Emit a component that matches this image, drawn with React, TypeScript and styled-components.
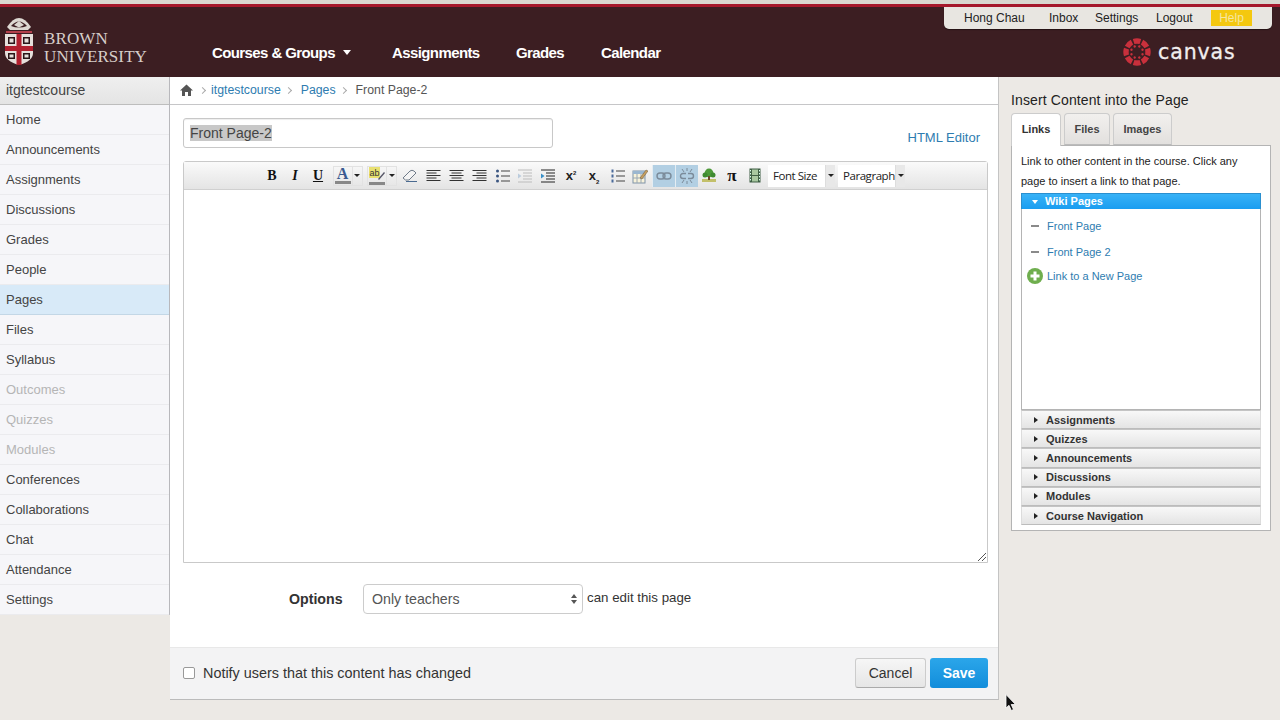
import React from "react";
import styled, { createGlobalStyle } from "styled-components";

const Global = createGlobalStyle`
  html, body { margin: 0; padding: 0; height: 720px; overflow: hidden; background: #ece9e5; }
  * { box-sizing: border-box; }
  body { font-family: "Liberation Sans", Arial, sans-serif; color: #333; }
`;

const Page = styled.div`
  width: 1280px; height: 720px; position: relative; overflow: hidden; display: flex; flex-direction: column;
`;
const TopStrip = styled.div`height: 4px; background: #d9d8d0;`;
const RedLine = styled.div`height: 3px; background: #a5182b;`;
const Header = styled.header`
  height: 70px; background: #3c1e22; display: flex; padding-left: 5px;
`;
const LogoBox = styled.div`display: flex; align-items: flex-start; width: 207px; padding-top: 10px;`;
const LogoText = styled.div`
  font-family: "Liberation Serif", serif; color: #d6cdc9; font-size: 17px; line-height: 18px; letter-spacing: 0.1px;
  margin: 13px 0 0 11px; white-space: nowrap; font-weight: 400;
`;
const Nav = styled.nav`display: flex; align-items: center; height: 70px; padding-top: 20px;`;
const NavItem = styled.span<{ $w: number }>`
  color: #fff; font-size: 15px; font-weight: 700; letter-spacing: -0.6px; width: ${p => p.$w}px; display: flex; align-items: center; white-space: nowrap;
`;
const Caret = styled.i`
  display: inline-block; width: 0; height: 0; border: 4.5px solid transparent; border-top: 5px solid #fff; border-bottom: 0; margin-left: 8px;
`;
const RightHead = styled.div`margin-left: auto; width: 336px; display: flex; flex-direction: column; align-items: flex-start;`;
const UserBar = styled.div`
  width: 328px; height: 22px; background: #e8e6e1; border-radius: 0 0 5px 5px; display: flex; align-items: center;
  font-size: 12px; color: #222; position: relative; box-shadow: 0 1px 1px rgba(0,0,0,.4);
`;
const UserLink = styled.span<{ $w: number }>`display: block; width: ${p => p.$w}px; white-space: nowrap;`;
const Help = styled.span`
  background: #f4c80f; color: #f5e6a0; width: 41px; height: 16px; text-align: center; line-height: 16px; font-size: 12px; margin-left: 0;
`;
const CanvasRow = styled.div`display: flex; align-items: center; margin: 9px 0 0 179px; gap: 7px;`;
const CanvasWord = styled.span`
  font-family: "DejaVu Sans", sans-serif; color: #f1eeee; font-size: 20.5px; line-height: 26px; letter-spacing: 0.9px; font-weight: 400;
  -webkit-text-stroke: 0.3px #f1eeee;
`;

const Body = styled.div`display: flex; height: 643px;`;
const Sidebar = styled.aside`
  width: 170px; height: 538px; background: #f6f6f9; border-right: 1px solid #b8b8bc; border-bottom: 1px solid #c4c4c8; flex: none;
`;
const CourseTitle = styled.div`
  height: 28px; background: linear-gradient(#efefef, #e4e4e4); border-bottom: 1px solid #bdbdbd; color: #444; font-size: 14px;
  line-height: 26px; padding-left: 6px;
`;
const SideItem = styled.div<{ $active?: boolean; $off?: boolean }>`
  height: 30px; padding-left: 6px; font-size: 13px; line-height: 30px;
  color: ${p => (p.$off ? "#b5b5b5" : "#444")};
  background: ${p => (p.$active ? "#d8eaf8" : "transparent")};
  border-bottom: 1px solid ${p => (p.$active ? "#c3d7e6" : "#ebebee")};
`;

const Main = styled.main`
  width: 829px; height: 623px; background: #fff; border-right: 1px solid #c4c4c4; border-bottom: 1px solid #bbb; flex: none; display: flex; flex-direction: column;
`;
const Crumbs = styled.div`
  height: 28px; border-bottom: 1px solid #c6c6c8; display: flex; align-items: center; padding-left: 10px; font-size: 12.3px; color: #555; flex: none;
  padding-bottom: 1px;
`;
const HomeIcon = styled.svg`margin-right: 3px; flex: none;`;
const CrumbLink = styled.span`color: #2e7cb0;`;
const CrumbSep = styled.span<{ $first?: boolean }>`
  display: inline-block; width: 5px; height: 5px; border-top: 1px solid #aaa; border-right: 1px solid #aaa; transform: rotate(45deg);
  margin: ${p => (p.$first ? "0 6px 0 4px" : "0 10px 0 5px")};
`;
const TitleRow = styled.div`display: flex; align-items: flex-start; padding: 13px 18px 0 13px; height: 56px; flex: none; justify-content: space-between;`;
const TitleInput = styled.div`
  width: 370px; height: 30px; border: 1px solid #c8c8c8; border-radius: 3px; padding: 5px 6px; font-size: 14px; line-height: 18px; color: #555;
  box-shadow: inset 0 1px 1px rgba(0,0,0,.07);
`;
const Selected = styled.span`background: #c8c8c8; color: #444;`;
const HtmlLink = styled.span`color: #2e7cb0; font-size: 13px; line-height: 16px; margin-top: 12px;`;
const Editor = styled.div`
  margin-left: 13px; width: 805px; height: 402px; border: 1px solid #c9c9c9; border-radius: 3px 3px 0 0; flex: none; position: relative; display: flex; flex-direction: column;
`;
const Toolbar = styled.div`
  height: 28px; background: linear-gradient(#fafafa, #e4e4e4); border-bottom: 1px solid #d0d0d0; display: flex; align-items: center; padding-left: 76.5px; flex: none;
`;
const TB = styled.span<{ $on?: boolean }>`
  width: 23px; height: 22px; display: flex; align-items: center; justify-content: center; flex: none;
  background: ${p => (p.$on ? "#b2cfe3" : "transparent")};
  border-left: ${p => (p.$on ? "1px solid #e4edf3" : "0")};
`;
const Letter = styled.span<{ $i?: boolean; $u?: boolean; $big?: number; $tone?: string }>`
  font-family: "Liberation Serif", serif; font-weight: 700; font-size: ${p => p.$big ?? 14}px; color: ${p => p.$tone ?? "#111"}; line-height: 14px;
  font-style: ${p => (p.$i ? "italic" : "normal")};
  text-decoration: ${p => (p.$u ? "underline" : "none")};
`;
const Sup = styled.span`
  font-family: "Liberation Sans", sans-serif; font-weight: 700; font-size: 13px; color: #222; line-height: 12px;
  & sup, & sub { font-size: 6px; line-height: 0; }
`;
const SplitBtn = styled.span`
  width: 34.5px; height: 22px; display: flex; align-items: center; flex: none; padding-left: 3px;
`;
const SplitMain = styled.span`
  width: 20px; height: 20px; border: 1px solid #e2e2e2; display: flex; align-items: center; justify-content: center; flex-direction: column;
`;
const SplitDrop = styled.span`
  width: 10px; height: 20px; border: 1px solid #e2e2e2; border-left: 0; display: flex; align-items: center; justify-content: center;
`;
const MiniCaret = styled.i`
  display: block; width: 0; height: 0; border: 3px solid transparent; border-top: 3px solid #222; border-bottom: 0;
`;
const Combo = styled.span<{ $ml: number; $w: number }>`
  margin-left: ${p => p.$ml}px; width: ${p => p.$w}px; height: 22px; background: #fff; display: flex; align-items: center; justify-content: space-between;
  font-size: 11.5px; color: #222; padding-left: 5px; flex: none; font-family: "Open Sans", sans-serif; letter-spacing: -0.45px;
`;
const ComboDrop = styled.span`
  width: 10px; height: 22px; background: #e8e8e8; display: flex; align-items: center; justify-content: center; border-left: 1px solid #ddd;
`;
const EditArea = styled.div`flex: 1; background: #fff;`;
const Grip = styled.svg`position: absolute; right: 0; bottom: 0;`;

const OptionsRow = styled.div`display: flex; align-items: center; height: 30px; margin-top: 21px; padding-left: 119px; flex: none; font-size: 14.2px;`;
const OptLabel = styled.span`font-weight: 700; color: #333; width: 74px;`;
const SelectBox = styled.div`
  width: 220px; height: 30px; border: 1px solid #ccc; border-radius: 4px; display: flex; align-items: center; justify-content: space-between; padding: 0 5px 0 8px; color: #555;
`;
const Updown = styled.span`display: flex; flex-direction: column; gap: 2px;`;
const UpTri = styled.i`display: block; width: 0; height: 0; border: 3.5px solid transparent; border-bottom: 4px solid #555; border-top: 0;`;
const DownTri = styled.i`display: block; width: 0; height: 0; border: 3.5px solid transparent; border-top: 4px solid #555; border-bottom: 0;`;
const OptTail = styled.span`font-size: 13.3px; color: #333; margin: 0 0 3px 4px;`;

const Footer = styled.div`
  margin-top: auto; height: 52px; background: #f3f3f4; border-top: 1px solid #e8e8e8; display: flex; align-items: center; padding: 0 10px 2px 13px; flex: none;
`;
const Check = styled.span`width: 12px; height: 12px; border: 1px solid #999; border-radius: 2px; background: #fff; margin-right: 8px; flex: none;`;
const Notify = styled.span`font-size: 14.4px; color: #333;`;
const Cancel = styled.span`
  margin-left: auto; width: 71px; height: 30px; border: 1px solid #ccc; border-bottom-color: #aaa; border-radius: 3px; background: linear-gradient(#f6f6f6, #e6e6e6);
  font-size: 14px; line-height: 28px; text-align: center; color: #333;
`;
const Save = styled.span`
  margin-left: 4px; width: 58px; height: 30px; border-radius: 3px; background: linear-gradient(#2ba6ea, #128ddb);
  font-size: 14px; font-weight: 700; line-height: 30px; text-align: center; color: #fff;
`;

const Right = styled.aside`flex: 1; padding: 15px 0 0 12px; min-width: 0;`;
const RHeading = styled.div`font-size: 14px; line-height: 16px; color: #222; letter-spacing: 0.12px;`;
const Tabs = styled.div`display: flex; margin-top: 5px; gap: 3px; height: 32px; position: relative; z-index: 1;`;
const Tab = styled.div<{ $on?: boolean; $w: number }>`
  width: ${p => p.$w}px; height: ${p => (p.$on ? 33 : 32)}px; border: 1px solid #ccc; border-bottom: ${p => (p.$on ? "0" : "1px solid #bbb")}; border-radius: 4px 4px 0 0;
  background: ${p => (p.$on ? "#fff" : "linear-gradient(#f2f0ee, #e2e0de)")}; font-size: 11px; font-weight: 700; line-height: 30px; text-align: center;
  color: ${p => (p.$on ? "#333" : "#444")};
`;
const TabPanel = styled.div`
  width: 260px; height: 386px; border: 1px solid #b4b4b4; background: #fff; padding: 5px 9px 0;
`;
const Intro = styled.div`font-size: 11px; line-height: 20px; color: #222; height: 42px;`;
const WikiHead = styled.div`
  height: 16px; background: linear-gradient(#38b2f7, #1a9df0); border: 1px solid #2a8fcf; border-bottom: 0; color: #fff; font-size: 11px; font-weight: 700; line-height: 15px;
  display: flex; align-items: center; padding-left: 10px;
`;
const WhiteDown = styled.i`display: block; width: 0; height: 0; border: 3.5px solid transparent; border-top: 4px solid #fff; border-bottom: 0; margin-right: 7px;`;
const WikiList = styled.div`height: 201px; border: 1px solid #b4b4b4; border-top: 0; padding-top: 4px;`;
const WikiRow = styled.div`
  height: 26px; display: flex; align-items: center; font-size: 11px; color: #2e7cb0; padding-left: 9px;
`;
const Dash = styled.i`display: block; width: 8px; height: 1.5px; background: #8a8a8a; margin-right: 8px;`;
const NewRow = styled.div`height: 22px; display: flex; align-items: center; font-size: 11px; color: #2e7cb0; padding-left: 5px; gap: 4px;`;
const AccList = styled.div`display: flex; flex-direction: column;`;
const Acc = styled.div`
  height: 19.2px; border: 1px solid #dcdcdc; border-top-color: #c4c4c4; border-bottom-color: #bcbcbc; background: linear-gradient(#f8f8f8, #e4e4e4);
  font-size: 11px; font-weight: 700; color: #333; display: flex; align-items: center; padding-left: 12px;
`;
const RightTri = styled.i`display: block; width: 0; height: 0; border: 3.5px solid transparent; border-left: 4px solid #222; border-right: 0; margin-right: 8px;`;
const Cursor = styled.svg`position: absolute; left: 1005px; top: 694px;`;

const Shield = () => (
  <svg width="28" height="48" viewBox="0 0 28 48">
    <path d="M2 10 Q14 -8 26 10 L23 13 L5 13 Z" fill="#ddd8d2" />
    <path d="M6 9 Q14 0 22 9 Q14 12 6 9 Z" fill="#3c1e22" />
    <path d="M9 8 L14 4 L19 8 L14 10.5 Z" fill="#ddd8d2" />
    <rect x="1" y="14" width="26" height="2" fill="#b3404c" />
    <path d="M0 17 H28 V36 Q28 44 14 48 Q0 44 0 36 Z" fill="#e6e0dc" />
    <rect x="11.5" y="17" width="5" height="31" fill="#b1202f" />
    <rect x="0" y="29" width="28" height="5" fill="#b1202f" />
    <rect x="3" y="20" width="7" height="7" fill="#2a1518" />
    <rect x="18" y="20" width="7" height="7" fill="#2a1518" />
    <rect x="3" y="36" width="7" height="6" fill="#2a1518" />
    <rect x="18" y="36" width="7" height="6" fill="#2a1518" />
    <rect x="4.5" y="21.5" width="4" height="4" fill="#e6e0dc" />
    <rect x="19.5" y="21.5" width="4" height="4" fill="#e6e0dc" />
    <rect x="4.5" y="37.5" width="4" height="3" fill="#e6e0dc" />
    <rect x="19.5" y="37.5" width="4" height="3" fill="#e6e0dc" />
  </svg>
);

const CanvasLogo = () => (
  <svg width="28" height="28" viewBox="-14 -14 28 28">
    {[0, 45, 90, 135, 180, 225, 270, 315].map(a => (
      <g key={a} transform={`rotate(${a})`}>
        <path d="M-4.2 -13 Q0 -14.4 4.2 -13 L2.6 -8 Q0 -8.6 -2.6 -8 Z" fill="#c9303c" />
      </g>
    ))}
    {[22.5, 67.5, 112.5, 157.5, 202.5, 247.5, 292.5, 337.5].map(a => (
      <circle key={a} r="1.2" cy="-6" transform={`rotate(${a})`} fill="#c9303c" />
    ))}
  </svg>
);

const Lines = ({ kind }: { kind: "l" | "c" | "r" }) => {
  const rows: [number, number][] =
    kind === "l" ? [[1, 14], [1, 10], [1, 14], [1, 10], [1, 14]] : kind === "c" ? [[1, 14], [3, 10], [1, 14], [3, 10], [1, 14]] : [[1, 14], [5, 10], [1, 14], [5, 10], [1, 14]];
  return (
    <svg width="15" height="13" viewBox="0 0 15 13">
      {rows.map((r, i) => <rect key={i} x={r[0] - 0.5} y={1 + i * 2.5} width={r[1]} height="1" fill="#333" />)}
    </svg>
  );
};

const ListIcon = ({ num }: { num?: boolean }) => (
  <svg width="15" height="14" viewBox="0 0 15 14">
    {[2, 7, 12].map(y => <rect key={y} x="6" y={y - 0.5} width="9" height="1" fill="#444" />)}
    {[2, 7, 12].map(y => num
      ? <rect key={y} x="1.5" y={y - 1.5} width="2" height="3" fill="#4a6a9a" />
      : <circle key={y} cx="2.5" cy={y} r="1.5" fill="#3a5580" />)}
  </svg>
);

const IndentIcon = ({ faded }: { faded?: boolean }) => (
  <svg width="16" height="14" viewBox="0 0 16 14">
    {[1, 4, 7, 10, 13].map((y, i) => (
      <rect key={y} x={i === 0 || i === 4 ? 1 : 6} y={y - 0.5} width={i === 0 || i === 4 ? 14 : 9} height="1" fill={faded ? "#bbb" : "#222"} />
    ))}
    <path d="M1 4.5 L4.5 7 L1 9.5 Z" fill={faded ? "#bcd" : "#3a90c8"} />
  </svg>
);

const Eraser = () => (
  <svg width="16" height="15" viewBox="0 0 16 15">
    <path d="M1 10 L8 3 Q10 1.5 12 3 L14 5 L7 12 L3.5 12 Z" fill="#f4f4f4" stroke="#6f7a88" />
    <path d="M4 13.5 H15" stroke="#4a6a90" />
  </svg>
);

const TableEdit = () => (
  <svg width="16" height="16" viewBox="0 0 16 16">
    <rect x="1" y="3" width="12" height="12" fill="#f7f2da" stroke="#7f93a8" />
    <rect x="1" y="3" width="12" height="3" fill="#9bb7d0" />
    <path d="M5 6 V15 M9 6 V15 M1 10 H13" stroke="#9aa8b4" strokeWidth="1" />
    <path d="M8 10 L14 2 L16 3 L10 11 Z" fill="#c6a060" stroke="#6b5232" strokeWidth=".5" />
  </svg>
);

const LinkIcon = () => (
  <svg width="16" height="12" viewBox="0 0 16 12">
    <rect x="1" y="3" width="8" height="6" rx="3" fill="none" stroke="#7b8b9a" strokeWidth="1.4" />
    <rect x="7" y="3" width="8" height="6" rx="3" fill="none" stroke="#7b8b9a" strokeWidth="1.4" />
  </svg>
);

const UnlinkIcon = () => (
  <svg width="16" height="16" viewBox="0 0 16 16">
    <path d="M7 6 H4 A2.5 2.5 0 0 0 4 11 H7 M9 6 H12 A2.5 2.5 0 0 1 12 11 H9" fill="none" stroke="#7b8b9a" strokeWidth="1.4" transform="translate(0 -.5)" />
    <path d="M3 1 L5 4 M8 0 V3 M13 1 L11 4 M3 15 L5 12 M8 16 V13 M13 15 L11 12" stroke="#7b8b9a" />
  </svg>
);

const ImageIcon = () => (
  <svg width="16" height="15" viewBox="0 0 16 15">
    <rect x="1" y="11" width="14" height="3" fill="#c3c06a" />
    <circle cx="8" cy="5" r="4.4" fill="#4e9a3a" />
    <circle cx="4" cy="7" r="2.5" fill="#3f8a30" />
    <circle cx="12" cy="7" r="2.5" fill="#3f8a30" />
    <rect x="7" y="8" width="2" height="4" fill="#6b4b2a" />
  </svg>
);

const Film = () => (
  <svg width="12" height="15" viewBox="0 0 12 15">
    <rect x="0.5" y="0.5" width="11" height="14" fill="#3f5f45" />
    <rect x="3" y="1.5" width="6" height="5.5" fill="#a8c8a0" />
    <rect x="3" y="8" width="6" height="5.5" fill="#a8c8a0" />
    {[2, 5, 8, 11].map(y => <g key={y}><rect x="1" y={y} width="1" height="1.4" fill="#dfe" /><rect x="10" y={y} width="1" height="1.4" fill="#dfe" /></g>)}
  </svg>
);

const nav: [string, number][] = [["Assignments", 124], ["Grades", 85], ["Calendar", 80]];
const sideItems: { t: string; on?: boolean; off?: boolean }[] = [
  { t: "Home" }, { t: "Announcements" }, { t: "Assignments" }, { t: "Discussions" }, { t: "Grades" }, { t: "People" },
  { t: "Pages", on: true }, { t: "Files" }, { t: "Syllabus" }, { t: "Outcomes", off: true }, { t: "Quizzes", off: true },
  { t: "Modules", off: true }, { t: "Conferences" }, { t: "Collaborations" }, { t: "Chat" }, { t: "Attendance" }, { t: "Settings" },
];
const accs = ["Assignments", "Quizzes", "Announcements", "Discussions", "Modules", "Course Navigation"];

export default function App() {
  return (
    <Page>
      <Global />
      <TopStrip />
      <RedLine />
      <Header>
        <LogoBox>
          <Shield />
          <LogoText>BROWN<br />UNIVERSITY</LogoText>
        </LogoBox>
        <Nav>
          <NavItem $w={180}>Courses &amp; Groups<Caret /></NavItem>
          {nav.map(([t, w]) => <NavItem key={t} $w={w}>{t}</NavItem>)}
        </Nav>
        <RightHead>
          <UserBar>
            <UserLink $w={20} />
            <UserLink $w={85}>Hong Chau</UserLink>
            <UserLink $w={46}>Inbox</UserLink>
            <UserLink $w={61}>Settings</UserLink>
            <UserLink $w={55}>Logout</UserLink>
            <Help>Help</Help>
          </UserBar>
          <CanvasRow>
            <CanvasLogo />
            <CanvasWord>canvas</CanvasWord>
          </CanvasRow>
        </RightHead>
      </Header>
      <Body>
        <Sidebar>
          <CourseTitle>itgtestcourse</CourseTitle>
          {sideItems.map(s => <SideItem key={s.t} $active={s.on} $off={s.off}>{s.t}</SideItem>)}
        </Sidebar>
        <Main>
          <Crumbs>
            <HomeIcon width="13" height="12" viewBox="0 0 13 12">
              <path d="M6.5 0.5 L13 6.5 H11 V12 H8 V8 H5 V12 H2 V6.5 H0 Z" fill="#555" />
            </HomeIcon>
            <CrumbSep $first />
            <CrumbLink>itgtestcourse</CrumbLink>
            <CrumbSep />
            <CrumbLink>Pages</CrumbLink>
            <CrumbSep />
            <span>Front Page-2</span>
          </Crumbs>
          <TitleRow>
            <TitleInput><Selected>Front Page-2</Selected></TitleInput>
            <HtmlLink>HTML Editor</HtmlLink>
          </TitleRow>
          <Editor>
            <Toolbar>
              <TB><Letter>B</Letter></TB>
              <TB><Letter $i>I</Letter></TB>
              <TB><Letter $u>U</Letter></TB>
              <SplitBtn>
                <SplitMain>
                  <Letter $big={16} $tone="#3a5a90">A</Letter>
                  <svg width="16" height="3" viewBox="0 0 16 3"><rect width="16" height="3" fill="#888" /></svg>
                </SplitMain>
                <SplitDrop><MiniCaret /></SplitDrop>
              </SplitBtn>
              <SplitBtn>
                <SplitMain>
                  <svg width="18" height="18" viewBox="0 0 18 18">
                    <rect x="1" y="0" width="11" height="11" fill="#e8e070" />
                    <text x="1.5" y="9" fontSize="9" fontFamily="Liberation Sans" fill="#333">ab</text>
                    <path d="M10 12 L16 5 L17 6 L11 13 Z" fill="#556" />
                    <rect x="1" y="15" width="16" height="3" fill="#888" />
                  </svg>
                </SplitMain>
                <SplitDrop><MiniCaret /></SplitDrop>
              </SplitBtn>
              <TB><Eraser /></TB>
              <TB><Lines kind="l" /></TB>
              <TB><Lines kind="c" /></TB>
              <TB><Lines kind="r" /></TB>
              <TB><ListIcon /></TB>
              <TB><IndentIcon faded /></TB>
              <TB><IndentIcon /></TB>
              <TB><Sup>x<sup>2</sup></Sup></TB>
              <TB><Sup>x<sub>2</sub></Sup></TB>
              <TB><ListIcon num /></TB>
              <TB><TableEdit /></TB>
              <TB $on><LinkIcon /></TB>
              <TB $on><UnlinkIcon /></TB>
              <TB><ImageIcon /></TB>
              <TB><Letter $big={17}>π</Letter></TB>
              <TB><Film /></TB>
              <Combo $ml={1.5} $w={67}>Font Size<ComboDrop><MiniCaret /></ComboDrop></Combo>
              <Combo $ml={3} $w={67}>Paragraph<ComboDrop><MiniCaret /></ComboDrop></Combo>
            </Toolbar>
            <EditArea />
            <Grip width="10" height="10" viewBox="0 0 10 10">
              <path d="M1 9 L9 1 M5 9 L9 5" stroke="#555" strokeWidth="1" />
            </Grip>
          </Editor>
          <OptionsRow>
            <OptLabel>Options</OptLabel>
            <SelectBox>
              Only teachers
              <Updown><UpTri /><DownTri /></Updown>
            </SelectBox>
            <OptTail>can edit this page</OptTail>
          </OptionsRow>
          <Footer>
            <Check />
            <Notify>Notify users that this content has changed</Notify>
            <Cancel>Cancel</Cancel>
            <Save>Save</Save>
          </Footer>
        </Main>
        <Right>
          <RHeading>Insert Content into the Page</RHeading>
          <Tabs>
            <Tab $on $w={50}>Links</Tab>
            <Tab $w={46}>Files</Tab>
            <Tab $w={59}>Images</Tab>
          </Tabs>
          <TabPanel>
            <Intro>Link to other content in the course. Click any page to insert a link to that page.</Intro>
            <WikiHead><WhiteDown />Wiki Pages</WikiHead>
            <WikiList>
              <WikiRow><Dash />Front Page</WikiRow>
              <WikiRow><Dash />Front Page 2</WikiRow>
              <NewRow>
                <svg width="16" height="16" viewBox="0 0 16 16">
                  <circle cx="8" cy="8" r="8" fill="#6fae4e" />
                  <path d="M8 3.5 V12.5 M3.5 8 H12.5" stroke="#fff" strokeWidth="3" />
                </svg>
                Link to a New Page
              </NewRow>
            </WikiList>
            <AccList>
              {accs.map(a => <Acc key={a}><RightTri />{a}</Acc>)}
            </AccList>
          </TabPanel>
        </Right>
      </Body>
      <Cursor width="12" height="18" viewBox="0 0 12 18">
        <path d="M1 0.5 L1 14 L4 11.3 L6.3 16.5 L8.5 15.5 L6.2 10.5 L10.5 10.5 Z" fill="#111" stroke="#fff" strokeWidth="0.8" />
      </Cursor>
    </Page>
  );
}
